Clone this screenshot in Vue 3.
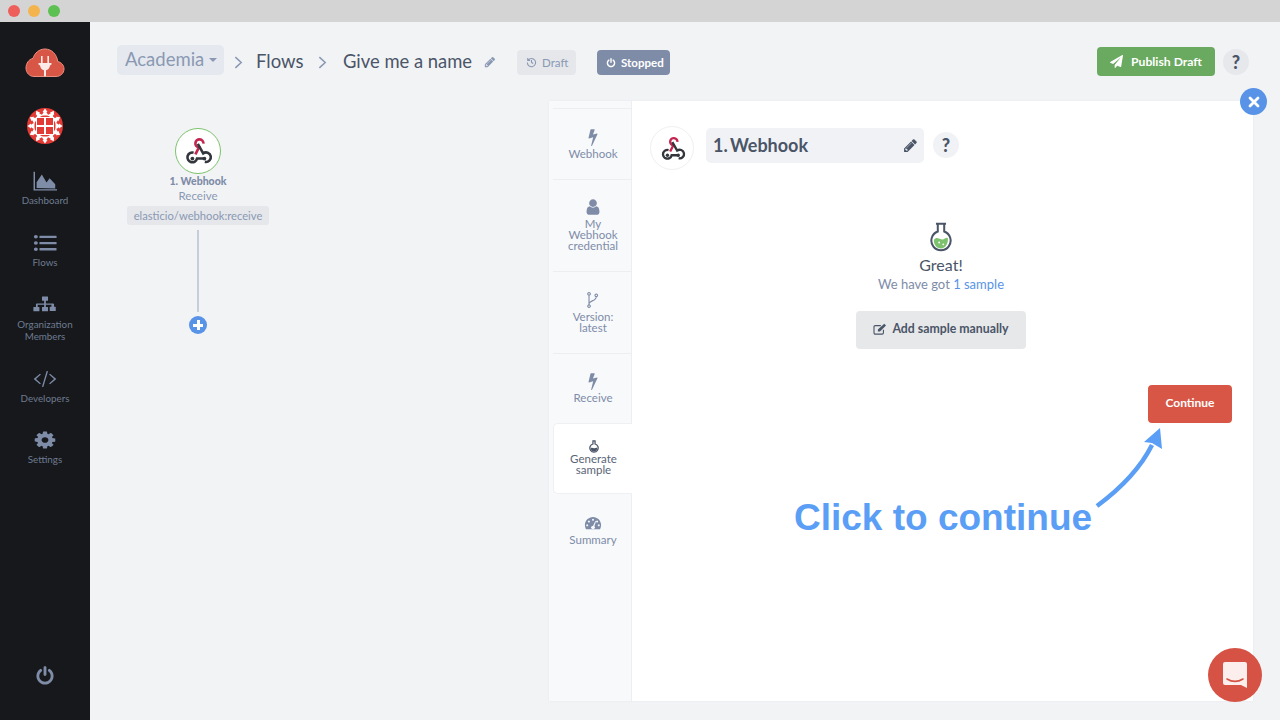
<script setup>
const bolt = 'M1333 566q18 20 7 44l-540 1157q-13 25-42 25-4 0-14-2-17-5-25.5-19t-4.5-30l197-808-406 101q-4 1-12 1-18 0-31-11-18-15-13-39l201-825q4-14 16-23t28-9h328q19 0 32 12.500t13 29.500q0 8-5 18l-171 463 396-98q8-2 12-2 19 0 34 15z'
const user = 'M1536 1399q0 109-62.500 187t-150.500 78h-854q-88 0-150.500-78t-62.500-187q0-85 8.500-160.500t31.500-152 58.500-131 94-89 134.500-34.500q131 128 313 128t313-128q76 0 134.500 34.500t94 89 58.500 131 31.500 152 8.500 160.500zm-256-887q0 159-112.500 271.500t-271.500 112.500-271.500-112.500-112.500-271.500 112.500-271.500 271.500-112.500 271.500 112.500 112.500 271.500z'
const cog = 'M1152 896q0-106-75-181t-181-75-181 75-75 181 75 181 181 75 181-75 75-181zm512-109v222q0 12-8 23t-20 13l-185 28q-19 54-39 91 35 50 107 138 10 12 10 25t-9 23q-27 37-99 108t-94 71q-12 0-26-9l-138-108q-44 23-91 38-16 136-29 186-7 28-36 28h-222q-14 0-24.500-8.500t-11.500-21.500l-28-184q-49-16-90-37l-141 107q-10 9-25 9-14 0-25-11-126-114-165-168-7-10-7-23 0-12 8-23 15-21 51-66.500t54-70.500q-27-50-41-99l-183-27q-13-2-21-12.500t-8-23.500v-222q0-12 8-23t19-13l186-28q14-46 39-92-40-57-107-138-10-12-10-24 0-10 9-23 26-36 98.500-107.500t94.500-71.500q13 0 26 10l138 107q44-23 91-38 16-136 29-186 7-28 36-28h222q14 0 24.500 8.500t11.500 21.500l28 184q49 16 90 37l142-107q9-9 24-9 13 0 25 10 129 119 165 170 7 8 7 22 0 12-8 23-15 21-51 66.500t-54 70.500q26 50 41 98l183 28q13 2 21 12.500t8 23.500z'
const plane = 'M1764 11q33 24 27 64l-256 1536q-5 29-32 45-14 8-31 8-11 0-24-5l-453-185-242 295q-18 23-49 23-13 0-22-4-19-7-30.500-23.500t-11.500-36.500v-349l864-1059-1069 925-395-162q-37-14-40-55-2-40 32-59l1664-960q15-9 32-9 20 0 36 11z'
const pencil = 'M491 1536l91-91-235-235-91 91v107h128v128h107zm523-928q0-22-22-22-10 0-17 7l-542 542q-7 7-7 17 0 22 22 22 10 0 17-7l542-542q7-7 7-17zm-54-192l416 416-832 832h-416v-416zm683 96q0 53-37 90l-166 166-416-416 166-165q36-38 90-38 53 0 91 38l235 234q37 39 37 91z'
const power = 'M1664 896q0 156-61 298t-164 245-245 164-298 61-298-61-245-164-164-245-61-298q0-182 80.500-343t226.500-270q43-32 95.500-25t83.500 50q32 42 24.500 94.500t-49.500 84.500q-98 74-151.500 181t-53.500 228q0 104 40.500 198.500t109.500 163.500 163.500 109.500 198.500 40.500 198.500-40.500 163.500-109.500 109.500-163.500 40.500-198.500q0-121-53.500-228t-151.500-181q-42-32-49.500-84.500t24.500-94.500q31-43 84-50t95 25q146 109 226.500 270t80.500 343zm-640-768v640q0 52-38 90t-90 38-90-38-38-90v-640q0-52 38-90t90-38 90 38 38 90z'
const area = 'M40 60h110v1580h1642v110H40zM270 1530V1010L660 320l350 700 230-360 420 520v390z'
const list = 'M64 340a150 150 0 1 0 300 0a150 150 0 1 0-300 0zM64 896a150 150 0 1 0 300 0a150 150 0 1 0-300 0zM64 1452a150 150 0 1 0 300 0a150 150 0 1 0-300 0zM510 240h1220q30 0 30 30v150q0 30-30 30H510q-30 0-30-30V270q0-30 30-30zM510 796h1220q30 0 30 30v150q0 30-30 30H510q-30 0-30-30V826q0-30 30-30zM510 1352h1220q30 0 30 30v150q0 30-30 30H510q-30 0-30-30v-150q0-30 30-30z'
const sitemap = 'M700 130h392q30 0 30 30v330q0 30-30 30H960v240h540q70 0 70 70v220h100q30 0 30 30v330q0 30-30 30h-392q-30 0-30-30v-330q0-30 30-30h100V880H960v190h130q30 0 30 30v330q0 30-30 30H700q-30 0-30-30v-330q0-30 30-30h130V880H350v190h100q30 0 30 30v330q0 30-30 30H60q-30 0-30-30v-330q0-30 30-30h160V830q0-70 70-70h540V520H700q-30 0-30-30V160q0-30 30-30z'
const code = 'M520 420l70 80-370 396 370 396-70 80L50 896zM1272 420l-70 80 370 396-370 396 70 80 470-476zM1020 170l100 30-350 1420-100-30z'
const gauge = 'M896 290C450 290 90 650 90 1100c0 140 35 270 95 390 10 20 30 30 50 30h1322c20 0 40-10 50-30 60-120 95-250 95-390 0-450-360-810-806-810zM896 470a100 100 0 1 1-.1 0zM490 640a100 100 0 1 1-.1 0zM1302 640a100 100 0 1 1-.1 0zM320 1010a100 100 0 1 1-.1 0zM1472 1010a100 100 0 1 1-.1 0zM1130 700l70 30-170 480c50 40 70 90 70 130 0 90-90 150-204 150s-204-60-204-150c0-90 90-150 204-150z'
const fork = 'M500 150a130 130 0 1 1-.1 0zM500 1380a130 130 0 1 1-.1 0zM1220 300a130 130 0 1 1-.1 0zM500 410v970M1220 560c0 460-720 380-720 720'

const navItems = [
  { label: 'Dashboard', d: area },
  { label: 'Flows', d: list },
  { label: 'Organization\nMembers', d: sitemap },
  { label: 'Developers', d: code },
  { label: 'Settings', d: cog }
]

const tabs = [
  { label: 'Webhook', d: bolt },
  { label: 'My\nWebhook\ncredential', d: user },
  { label: 'Version:\nlatest', d: fork, stroked: true },
  { label: 'Receive', d: bolt },
  { label: 'Generate\nsample', flask: true, active: true },
  { label: 'Summary', d: gauge, even: true }
]

const avatarSpokes = [0, 30, 60, 90, 120, 150, 180, 210, 240, 270, 300, 330]
</script>

<template>
  <div class="window">
    <div class="titlebar">
      <span class="light red"></span>
      <span class="light amber"></span>
      <span class="light green"></span>
    </div>

    <div class="app">
      <aside class="sidebar">
        <svg class="logo" viewBox="0 0 40 30" width="40" height="30">
          <path d="M9 28.500h22c4.500 0 8-3.200 8-7.500 0-3.800-2.700-6.800-6.300-7.400C32 6.500 26.800 1 20 1c-5.800 0-10.500 4-12 9.400C3.700 11.300 1 15.500 1 20c0 4.800 3.500 8.500 8 8.500z" fill="#d85645" stroke="#ee8d80" stroke-width="1"/>
          <path d="M16 8h1.600v7h4.800V8H24v7h2.500v1.500L25 17.500c-.3 2.500-2 4.300-4 4.800v6h-2v-6c-2-.5-3.700-2.300-4-4.800l-1.500-1V15H16z" fill="#fbeae8"/>
        </svg>

        <svg class="avatar" viewBox="0 0 36 36" width="36" height="36">
          <circle cx="18" cy="18" r="18" fill="#e23a35"/>
          <g v-for="deg in avatarSpokes" :key="deg" :transform="`rotate(${deg} 18 18)`">
            <path d="M18 .5l2.500 3.500h-1.200l2.200 3.500h-7l2.200-3.500h-1.200z" fill="#fff"/>
          </g>
          <rect x="9" y="9" width="18" height="18" fill="#fff"/>
          <rect x="10" y="10" width="7" height="7" fill="#e23a35"/>
          <rect x="19" y="10" width="7" height="7" fill="#e23a35"/>
          <rect x="10" y="19" width="7" height="7" fill="#e23a35"/>
          <rect x="19" y="19" width="7" height="7" fill="#e23a35"/>
        </svg>

        <nav class="nav">
          <a v-for="item in navItems" :key="item.label" class="nav-item">
            <svg class="nav-icon" viewBox="0 0 1792 1792" width="24" height="20" preserveAspectRatio="none">
              <path :d="item.d"/>
            </svg>
            <span class="nav-label">{{ item.label }}</span>
          </a>
        </nav>

        <svg class="power" viewBox="0 0 1792 1792" width="20" height="20"><path :d="power"/></svg>
      </aside>

      <main class="main">
        <header class="header">
          <div class="crumb-pill">Academia <span class="caret"></span></div>
          <svg class="chevron first" viewBox="0 0 10 14" width="9" height="13"><path d="M1.500 1l6.500 6-6.500 6"/></svg>
          <span class="crumb">Flows</span>
          <svg class="chevron" viewBox="0 0 10 14" width="9" height="13"><path d="M1.500 1l6.500 6-6.500 6"/></svg>
          <span class="crumb name">Give me a name</span>
          <svg class="edit" viewBox="0 0 1792 1792" width="12" height="12"><path :d="pencil"/></svg>

          <span class="badge draft">
            <svg viewBox="0 0 16 16" width="11" height="11"><path d="M3.200 4.500A6 6 0 1 1 2 8M2.500 1.500v3.400h3.400M8 4.500V8l2.500 1.500" fill="none" stroke="currentColor" stroke-width="1.600"/></svg>
            Draft
          </span>
          <span class="badge stopped">
            <svg viewBox="0 0 1792 1792" width="10" height="10"><path :d="power" fill="currentColor"/></svg>
            Stopped
          </span>

          <button class="publish">
            <svg viewBox="0 0 1792 1792" width="13" height="13"><path :d="plane" fill="currentColor"/></svg>
            Publish Draft
          </button>
          <span class="help top-help">?</span>
        </header>

        <div class="workspace">
          <section class="canvas">
            <div class="node">
              <div class="node-circle">
                <svg viewBox="0 0 32 32" width="30" height="30">
                  <path d="M13.200 19.500L17 12.200a4.300 4.300 0 1 1 4.800-4" fill="none" stroke="#c5264f" stroke-width="2.800"/>
                  <path d="M11.300 17.800a5.200 5.200 0 1 0 3.700 6.200h8.700" fill="none" stroke="#33363c" stroke-width="2.800"/>
                  <path d="M15.800 8.500l5.700 10a5.100 5.100 0 1 1 1.800 9" fill="none" stroke="#33363c" stroke-width="2.800"/>
                  <circle cx="10" cy="24" r="2" fill="#33363c"/>
                  <circle cx="22.800" cy="24" r="2" fill="#33363c"/>
                </svg>
              </div>
              <div class="node-title">1. Webhook</div>
              <div class="node-sub">Receive</div>
              <div class="node-tag">elasticio/webhook:receive</div>
              <div class="node-line"></div>
              <span class="node-add"></span>
            </div>
          </section>

          <section class="panel">
            <div class="tabs">
              <div v-for="tab in tabs" :key="tab.label" class="tab" :class="{ active: tab.active }">
                <svg v-if="tab.flask" class="tab-flask" viewBox="0 0 24 30" width="10" height="13">
                  <path d="M8 1.500h8M9.500 1.500v7.500a10 10 0 1 0 5 0V1.500" fill="#fff" stroke="#4a5568" stroke-width="3"/>
                  <path d="M4 19c4-3 6 1 9 0s5-2 7-.5c0 5-4 8.500-8 8.500s-8-4-8-8z" fill="#4a5568"/>
                </svg>
                <svg v-else class="tab-icon" :class="{ stroked: tab.stroked }" viewBox="0 0 1792 1792" width="18" height="18">
                  <path :d="tab.d" :fill-rule="tab.even ? 'evenodd' : 'nonzero'"/>
                </svg>
                <span class="tab-label">{{ tab.label }}</span>
              </div>
            </div>

            <div class="content">
              <div class="step-head">
                <div class="step-circle">
                  <svg viewBox="0 0 32 32" width="27" height="27">
                    <path d="M13.200 19.500L17 12.200a4.300 4.300 0 1 1 4.800-4" fill="none" stroke="#c5264f" stroke-width="2.800"/>
                    <path d="M11.300 17.800a5.200 5.200 0 1 0 3.700 6.200h8.700" fill="none" stroke="#33363c" stroke-width="2.800"/>
                    <path d="M15.800 8.500l5.700 10a5.100 5.100 0 1 1 1.800 9" fill="none" stroke="#33363c" stroke-width="2.800"/>
                    <circle cx="10" cy="24" r="2" fill="#33363c"/>
                    <circle cx="22.800" cy="24" r="2" fill="#33363c"/>
                  </svg>
                </div>
                <div class="step-name">
                  <span>1. Webhook</span>
                  <svg viewBox="0 0 1792 1792" width="15" height="15"><path :d="pencil"/></svg>
                </div>
                <span class="help step-help">?</span>
              </div>

              <div class="result">
                <svg viewBox="0 0 24 32" width="22" height="30">
                  <path d="M6.500 1.500h11M8.500 1.500v8.500a10.500 10.500 0 1 0 7 0V1.500" fill="#fff" stroke="#4a5568" stroke-width="2.200"/>
                  <path d="M4.300 19c2.500-3.500 5-1.500 8-.5s5-2.500 7-1.500c1.300 5-2.500 11.500-7.300 11.500S3.700 24 4.300 19z" fill="#7cc26c"/>
                  <circle cx="10" cy="22" r="1" fill="#fff"/>
                  <circle cx="14.500" cy="24" r="1" fill="#fff"/>
                </svg>
                <div class="great">Great!</div>
                <div class="got">We have got <a class="sample-link">1 sample</a></div>
                <button class="add-sample">
                  <svg viewBox="0 0 16 14" width="14" height="12" fill="none" stroke="currentColor" stroke-width="1.300">
                    <path d="M12 8v3.500a1.500 1.500 0 0 1-1.500 1.500h-8A1.500 1.500 0 0 1 1 11.500v-7A1.500 1.500 0 0 1 2.500 3H9"/>
                    <path d="M5.500 7.500l7.500-6.500 2 2-7 7H5.500z" fill="currentColor" stroke="none"/>
                  </svg>
                  Add sample manually
                </button>
              </div>

              <div class="actions">
                <button class="continue">Continue</button>
              </div>

              <div class="annotation">
                <span class="annotation-text">Click to continue</span>
                <svg class="annotation-arrow" viewBox="0 0 70 82" width="70" height="82">
                  <path d="M3 79C30 59 47 40 58 18" fill="none" stroke="#5a9ef5" stroke-width="4.500"/>
                  <path d="M66 1L68 22 58 16 50 15z" fill="#5a9ef5"/>
                </svg>
              </div>
            </div>

            <button class="close">
              <svg viewBox="0 0 12 12" width="12" height="12"><path d="M2 2l8 8M10 2l-8 8" stroke="#fff" stroke-width="2.800" stroke-linecap="round"/></svg>
            </button>
          </section>
        </div>
      </main>

      <button class="chat">
        <svg viewBox="0 0 26 28" width="26" height="28">
          <path d="M3 1h20a2 2 0 0 1 2 2v24l-6-3H3a2 2 0 0 1-2-2V3a2 2 0 0 1 2-2z" fill="#fbeeec"/>
          <path d="M5 18c5 3 11 3 16 0" fill="none" stroke="#d65245" stroke-width="1.600" stroke-linecap="round"/>
        </svg>
      </button>
    </div>
  </div>
</template>

<style scoped>
.window {
  width: 1280px;
  height: 720px;
  display: flex;
  flex-direction: column;
  overflow: hidden;
  font-family: Lato, "Open Sans", sans-serif;
  color: #4a5568;
}

.titlebar {
  height: 22px;
  flex: none;
  display: flex;
  align-items: center;
  gap: 8px;
  padding-left: 8px;
  background: #d4d4d4;
}

.light {
  width: 12px;
  height: 12px;
  border-radius: 50%;
}
.red { background: #ee5f5b; }
.amber { background: #f3b44e; }
.green { background: #5cc052; }

.app {
  flex: 1;
  display: flex;
  position: relative;
  min-height: 0;
}

.sidebar {
  width: 90px;
  flex: none;
  display: flex;
  flex-direction: column;
  align-items: center;
  padding: 26px 0 34px;
  box-sizing: border-box;
  background: #16181b;
}

.logo { display: block; }

.avatar {
  display: block;
  margin-top: 30px;
}

.nav {
  display: flex;
  flex-direction: column;
  align-items: center;
  gap: 27px;
  margin-top: 27px;
}

.nav-item {
  display: flex;
  flex-direction: column;
  align-items: center;
}

.nav-item:last-child { margin-top: -1px; }

.nav-icon {
  display: block;
  margin-bottom: 3px;
  fill: #7e8ca8;
}

.nav-label {
  font-size: 9.800px;
  line-height: 12px;
  color: #6f7b91;
  text-align: center;
  white-space: pre-line;
}

.power {
  margin-top: auto;
  fill: #7e8ca8;
}

.main {
  flex: 1;
  min-width: 0;
  display: flex;
  flex-direction: column;
  background: #f2f3f5;
}

.header {
  height: 79px;
  flex: none;
  display: flex;
  align-items: center;
  padding: 0 31px 0 27px;
  box-sizing: border-box;
}

.crumb-pill {
  height: 30px;
  width: 107px;
  box-sizing: border-box;
  display: flex;
  align-items: center;
  gap: 5px;
  padding: 0 0 2px 8px;
  margin-top: -3px;
  border-radius: 5px;
  background: #e5e8ee;
  color: #8a99b3;
  font-size: 18.500px;
}

.caret {
  width: 0;
  height: 0;
  margin-top: 2px;
  border-left: 4.500px solid transparent;
  border-right: 4.500px solid transparent;
  border-top: 4.500px solid #8a99b3;
}

.chevron {
  margin: 2px 13px 0 15px;
  fill: none;
  stroke: #8a99b3;
  stroke-width: 1.700;
}
.chevron.first { margin-left: 10px; margin-right: 13px; }

.crumb {
  margin-top: -2px;
  font-size: 18.500px;
}
.name {
  margin-left: 2.500px;
  font-size: 18.400px;
}

.edit {
  margin-left: 12px;
  fill: #8a99b3;
}

.badge {
  height: 25px;
  margin-top: 2px;
  display: flex;
  align-items: center;
  gap: 5px;
  box-sizing: border-box;
  border-radius: 4px;
  font-size: 11.500px;
}

.draft {
  width: 59px;
  margin-left: 21px;
  padding-left: 9px;
  background: #e5e7eb;
  color: #8a99b3;
}

.stopped {
  width: 73px;
  margin-left: 21px;
  padding-left: 9px;
  background: #7e8ca8;
  color: #fff;
  font-weight: 700;
}

.publish {
  width: 118px;
  height: 29px;
  margin-left: auto;
  margin-right: 8px;
  display: flex;
  align-items: center;
  justify-content: center;
  gap: 8px;
  border: 0;
  border-radius: 4px;
  background: #69a960;
  color: #fff;
  font: 700 12.200px Lato, sans-serif;
}

.help {
  width: 26px;
  height: 26px;
  display: flex;
  align-items: center;
  justify-content: center;
  border-radius: 50%;
  background: #f1f2f5;
  color: #4a5568;
  font-size: 18px;
  font-weight: 900;
}
.top-help { background: #e6e8ec; }
.step-help { margin-top: -6px; }

.workspace {
  flex: 1;
  min-height: 0;
  display: flex;
  padding: 0 27px 19px 37px;
}

.canvas {
  flex: 1;
  padding-top: 27px;
}

.node {
  width: 142px;
  display: flex;
  flex-direction: column;
  align-items: center;
}

.node-circle {
  width: 46px;
  height: 46px;
  box-sizing: border-box;
  display: flex;
  align-items: center;
  justify-content: center;
  border: 1px solid #7cc26c;
  border-radius: 50%;
  background: #fff;
}

.node-title {
  margin-top: 1px;
  font-size: 10.500px;
  line-height: 13px;
  font-weight: 900;
  color: #7e8ca8;
}

.node-sub {
  font-size: 11.500px;
  line-height: 15px;
  color: #8a99b3;
}

.node-tag {
  width: 142px;
  height: 19px;
  margin-top: 3px;
  border-radius: 3px;
  background: #e5e7eb;
  color: #8a99b3;
  font-size: 11.200px;
  line-height: 19px;
  text-align: center;
  white-space: nowrap;
}

.node-line {
  width: 2px;
  height: 82px;
  margin-top: 5px;
  background: #c5ccdc;
}

.node-add {
  width: 18px;
  height: 18px;
  margin-top: 4px;
  border-radius: 50%;
  background:
    linear-gradient(#fff, #fff) center / 10px 3px no-repeat,
    linear-gradient(#fff, #fff) center / 3px 10px no-repeat,
    #5893e8;
}

.panel {
  width: 704px;
  flex: none;
  display: flex;
  position: relative;
  background: #fff;
  box-shadow: 0 0 2px rgba(120, 130, 150, .1);
}

.tabs {
  width: 83px;
  flex: none;
  box-sizing: border-box;
  padding: 7px 0 0 4px;
  border-right: 1px solid #eceef2;
  background: #f8f9fb;
}

.tab {
  display: flex;
  flex-direction: column;
  align-items: center;
  padding: 18px 0 20px 2px;
  border-top: 1px solid #eceef2;
  color: #7e8ca8;
}

.tab:nth-child(1), .tab:nth-child(3) { padding-top: 19px; }
.tab:nth-child(6) { border-top: 0; padding-top: 20px; }

.tab.active {
  height: 71px;
  width: 79px;
  box-sizing: border-box;
  padding: 16px 0 0 1px;
  border: 1px solid #eef0f4;
  border-right: 0;
  border-radius: 5px 0 0 5px;
  background: #fff;
  color: #5a6577;
}

.tab-icon {
  display: block;
  margin-bottom: 2px;
  fill: currentColor;
}

.tab-icon.stroked {
  fill: none;
  stroke: currentColor;
  stroke-width: 110;
}

.tab-flask { display: block; }

.tab-label {
  font-size: 11.500px;
  line-height: 11px;
  text-align: center;
  white-space: pre-line;
}

.content {
  flex: 1;
  min-width: 0;
  position: relative;
  display: flex;
  flex-direction: column;
  padding-top: 25px;
}

.step-head {
  display: flex;
  align-items: center;
  padding-left: 18px;
}

.step-circle {
  width: 44px;
  height: 44px;
  box-sizing: border-box;
  display: flex;
  align-items: center;
  justify-content: center;
  border: 1px solid #eef0f2;
  border-radius: 50%;
}

.step-name {
  width: 218px;
  height: 35px;
  box-sizing: border-box;
  display: flex;
  align-items: center;
  justify-content: space-between;
  margin: -6px 9px 0 12px;
  padding: 0 6px 0 7px;
  border-radius: 5px;
  background: #f1f2f5;
  font-size: 18px;
  font-weight: 700;
  word-spacing: -2px;
  color: #4a5568;
}

.step-name svg { fill: #4a5568; }

.result {
  display: flex;
  flex-direction: column;
  align-items: center;
  margin-top: 52px;
  padding-right: 3px;
}

.great {
  font-size: 16px;
  line-height: 26px;
  color: #4a5568;
}

.got {
  font-size: 13px;
  line-height: 12px;
  color: #7e8ca8;
}

.sample-link { color: #5893e8; }

.add-sample {
  width: 170px;
  height: 38px;
  margin-top: 21px;
  padding: 0 0 3px;
  display: flex;
  align-items: center;
  justify-content: center;
  gap: 5px;
  border: 0;
  border-radius: 4px;
  background: #e7e8ea;
  color: #4a5568;
  font: 700 12.300px Lato, sans-serif;
}

.actions {
  display: flex;
  justify-content: flex-end;
  margin-top: 36px;
  padding-right: 21px;
}

.continue {
  width: 84px;
  height: 38px;
  padding: 0 0 3px;
  border: 0;
  border-radius: 4px;
  background: #d85645;
  color: #fff;
  font: 700 12px Lato, sans-serif;
}

.annotation {
  position: absolute;
  left: 162px;
  top: 327px;
  display: flex;
}

.annotation-text {
  margin-top: 70px;
  font-family: "Liberation Sans", Arial, sans-serif;
  font-size: 37px;
  font-weight: 700;
  line-height: 40px;
  color: #5a9ef5;
  white-space: nowrap;
}

.annotation-arrow {
  flex: none;
  margin: -1px 0 0 2px;
}

.close {
  position: absolute;
  right: -14px;
  top: -13px;
  width: 27px;
  height: 27px;
  padding: 0;
  display: flex;
  align-items: center;
  justify-content: center;
  border: 0;
  border-radius: 50%;
  background: #5893e8;
}

.chat {
  position: absolute;
  right: 18px;
  bottom: 18px;
  width: 54px;
  height: 54px;
  padding: 0;
  display: flex;
  align-items: center;
  justify-content: center;
  border: 0;
  border-radius: 50%;
  background: #d65245;
}
</style>
